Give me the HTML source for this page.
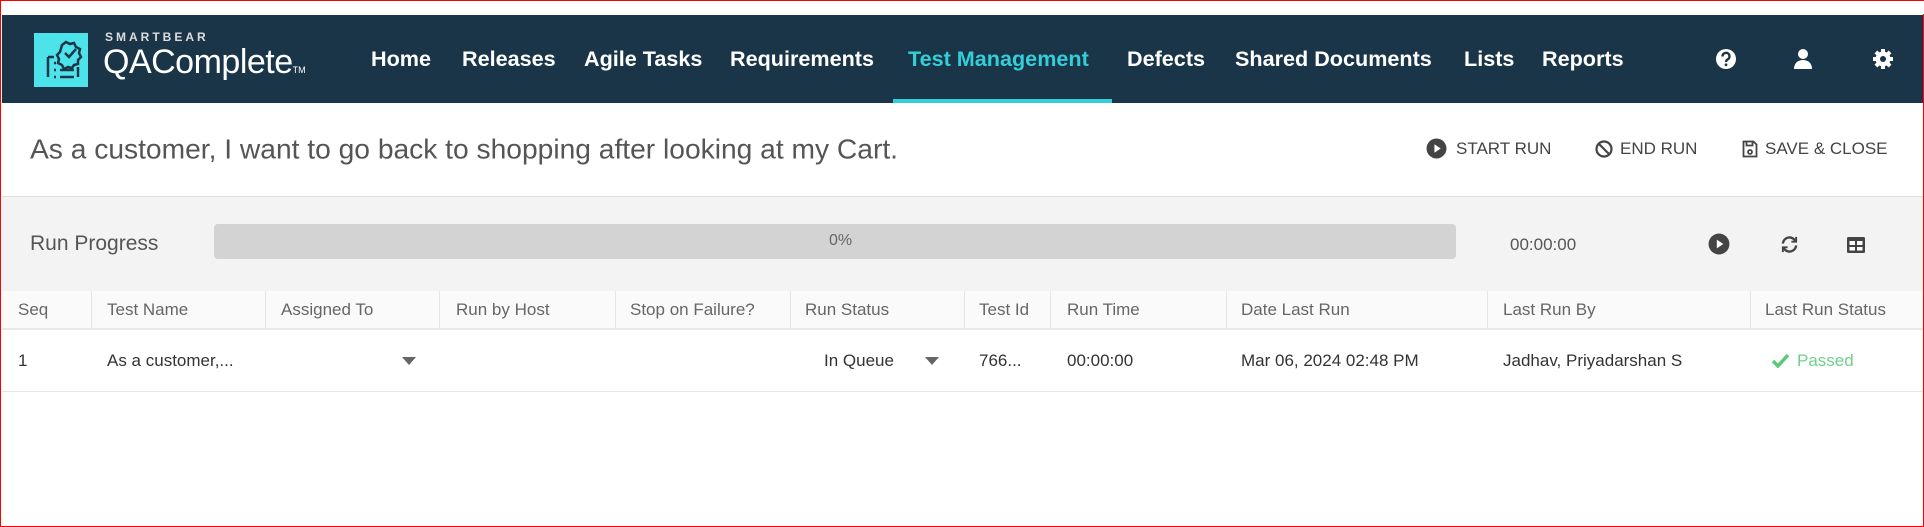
<!DOCTYPE html>
<html><head><meta charset="utf-8"><style>
*{margin:0;padding:0;box-sizing:border-box}
body{width:1924px;height:527px;overflow:hidden;background:#fff;font-family:"Liberation Sans",sans-serif;position:relative;border:1px solid #f00}
.a{position:absolute;white-space:nowrap}
.nav{position:absolute;left:1px;top:14px;width:1921px;height:88px;background:#1a3547}
.ni{position:absolute;top:44px;transform:translateY(-50%);color:#fff;font-weight:bold;font-size:21.6px}
.t{color:#555}
.hd{font-size:17px;color:#666;top:309px;transform:translateY(-50%)}
.rw{font-size:17px;color:#333;top:360px;transform:translateY(-50%)}
.sep{position:absolute;top:290px;height:39px;width:1px;background:#e6e6e6}
.btn{font-size:17px;color:#444;top:148px;transform:translateY(-50%)}
</style></head><body>
<div class="a" style="left:0;top:0;width:1924px;height:13px;background:#fff"></div>
<div class="nav">
 <div class="a" style="left:32px;top:18px;width:54px;height:54px;background:#4de3eb"></div>
 <svg class="a" style="left:32px;top:18px" width="54" height="54" viewBox="0 0 54 54" fill="none" stroke="#1a3547" stroke-width="2.5">
  <path d="M14 24v20M14 24h6M20 30h2M20 37h2M26 37h14M20 44h2M26 44h14M44 34v10"/>
  <path d="M28 12l4-3 4 2 4-1 2 4 4 2-1 4 2 4-3 3 0 4-4 1-2 3-4-1-4 2-2-4-4-2 1-4-2-4 3-3z"/>
  <path d="M31 20l4 4 7-8"/>
 </svg>
 <div class="a" style="left:103px;top:15px;font-size:12px;letter-spacing:3px;color:#ddd;font-weight:bold">SMARTBEAR</div>
 <div class="a" style="left:101px;top:28px;font-size:34px;color:#fff;letter-spacing:-0.5px">QAComplete<span style="font-size:9px;letter-spacing:0">TM</span></div>
 <div class="ni" style="left:369px">Home</div>
 <div class="ni" style="left:460px">Releases</div>
 <div class="ni" style="left:582px">Agile Tasks</div>
 <div class="ni" style="left:728px">Requirements</div>
 <div class="ni" style="left:906px;color:#33cfd9">Test Management</div>
 <div class="a" style="left:891px;top:84px;width:219px;height:4px;background:#33cfd9"></div>
 <div class="ni" style="left:1125px">Defects</div>
 <div class="ni" style="left:1233px">Shared Documents</div>
 <div class="ni" style="left:1462px">Lists</div>
 <div class="ni" style="left:1540px">Reports</div>
 <svg class="a" style="left:1713px;top:33px" width="22" height="22" viewBox="0 0 22 22"><circle cx="11" cy="11" r="10" fill="#fff"/><path d="M7.5 8.5a3.5 3.5 0 1 1 5 3c-1 .6-1.5 1-1.5 2.5" stroke="#1a3547" stroke-width="2.4" fill="none"/><circle cx="11" cy="16.8" r="1.4" fill="#1a3547"/></svg>
 <svg class="a" style="left:1790px;top:33px" width="22" height="22" viewBox="0 0 22 22" fill="#fff"><circle cx="11" cy="6" r="5"/><path d="M2 21c0-6 4-9 9-9s9 3 9 9z"/></svg>
 <svg class="a" style="left:1870px;top:33px" width="22" height="22" viewBox="0 0 22 22"><g fill="#fff"><circle cx="11" cy="11" r="7.5"/><rect x="9" y="1" width="4" height="20"/><rect x="1" y="9" width="20" height="4"/><rect x="9" y="1" width="4" height="20" transform="rotate(45 11 11)"/><rect x="9" y="1" width="4" height="20" transform="rotate(-45 11 11)"/></g><circle cx="11" cy="11" r="3" fill="#1a3547"/></svg>
</div>
<div class="a t" style="left:29px;top:148px;transform:translateY(-50%);font-size:28.2px;color:#555">As a customer, I want to go back to shopping after looking at my Cart.</div>
<svg class="a" style="left:1425px;top:137px" width="21" height="21" viewBox="0 0 20 20"><circle cx="10" cy="10" r="9.5" fill="#444"/><path d="M8 6l6 4-6 4z" fill="#fff"/></svg>
<div class="a btn" style="left:1455px">START RUN</div>
<svg class="a" style="left:1594px;top:139px" width="18" height="18" viewBox="0 0 18 18" fill="none" stroke="#444" stroke-width="2.2"><circle cx="9" cy="9" r="7.5"/><path d="M4 4l10 10"/></svg>
<div class="a btn" style="left:1619px">END RUN</div>
<svg class="a" style="left:1741px;top:139px" width="16" height="18" viewBox="0 0 16 18" fill="none" stroke="#444" stroke-width="1.8"><path d="M1.5 1.5h10l3 3v12h-13z"/><path d="M4.5 1.5v4h6v-4"/><circle cx="8" cy="12" r="2"/></svg>
<div class="a btn" style="left:1764px">SAVE &amp; CLOSE</div>
<div class="a" style="left:1px;top:195px;width:1921px;height:95px;background:#f3f3f3;border-top:1px solid #ddd"></div>
<div class="a" style="left:29px;top:243px;transform:translateY(-50%);font-size:21px;color:#555">Run Progress</div>
<div class="a" style="left:213px;top:223px;width:1242px;height:35px;background:#d3d3d3;border-radius:4px"></div>
<div class="a" style="left:828px;top:240px;transform:translateY(-50%);font-size:16px;color:#666">0%</div>
<div class="a" style="left:1509px;top:244px;transform:translateY(-50%);font-size:17px;color:#555">00:00:00</div>
<svg class="a" style="left:1707px;top:232px" width="22" height="22" viewBox="0 0 20 20"><circle cx="10" cy="10" r="9.5" fill="#444"/><path d="M8 6l6 4-6 4z" fill="#fff"/></svg>
<svg class="a" style="left:1779px;top:234px" width="19" height="19" viewBox="0 0 20 20" fill="none" stroke="#444" stroke-width="2.5"><path d="M3 9a7 7 0 0 1 13-3M17 11a7 7 0 0 1-13 3"/><path d="M17 2v5h-5M3 18v-5h5" stroke-width="2"/></svg>
<svg class="a" style="left:1846px;top:236px" width="18" height="16" viewBox="0 0 18 16"><rect x="0" y="0" width="18" height="16" rx="1.5" fill="#444"/><g fill="#fff"><rect x="2.5" y="4" width="5.5" height="4"/><rect x="10" y="4" width="5.5" height="4"/><rect x="2.5" y="10" width="5.5" height="3.5"/><rect x="10" y="10" width="5.5" height="3.5"/></g></svg>
<div class="a" style="left:1px;top:290px;width:1921px;height:39px;background:#fafafa;border-bottom:2px solid #e8e8e8"></div>
<div class="sep" style="left:90px"></div><div class="sep" style="left:264px"></div><div class="sep" style="left:438px"></div><div class="sep" style="left:614px"></div><div class="sep" style="left:789px"></div><div class="sep" style="left:963px"></div><div class="sep" style="left:1049px"></div><div class="sep" style="left:1225px"></div><div class="sep" style="left:1486px"></div><div class="sep" style="left:1749px"></div>
<div class="a hd" style="left:17px">Seq</div>
<div class="a hd" style="left:106px">Test Name</div>
<div class="a hd" style="left:280px">Assigned To</div>
<div class="a hd" style="left:455px">Run by Host</div>
<div class="a hd" style="left:629px">Stop on Failure?</div>
<div class="a hd" style="left:804px">Run Status</div>
<div class="a hd" style="left:978px">Test Id</div>
<div class="a hd" style="left:1066px">Run Time</div>
<div class="a hd" style="left:1240px">Date Last Run</div>
<div class="a hd" style="left:1502px">Last Run By</div>
<div class="a hd" style="left:1764px">Last Run Status</div>
<div class="a" style="left:1px;top:390px;width:1921px;height:1px;background:#e6e6e6"></div>
<div class="a rw" style="left:17px">1</div>
<div class="a rw" style="left:106px">As a customer,...</div>
<div class="a" style="left:401px;top:356px;width:0;height:0;border-left:7px solid transparent;border-right:7px solid transparent;border-top:8px solid #666"></div>
<div class="a rw" style="left:823px">In Queue</div>
<div class="a" style="left:924px;top:356px;width:0;height:0;border-left:7px solid transparent;border-right:7px solid transparent;border-top:8px solid #666"></div>
<div class="a rw" style="left:978px">766...</div>
<div class="a rw" style="left:1066px">00:00:00</div>
<div class="a rw" style="left:1240px">Mar 06, 2024 02:48 PM</div>
<div class="a rw" style="left:1502px">Jadhav, Priyadarshan S</div>
<svg class="a" style="left:1770px;top:352px" width="19" height="15" viewBox="0 0 19 15"><path d="M2 8l5 5L17 2" stroke="#5cc87a" stroke-width="3.5" fill="none"/></svg>
<div class="a rw" style="left:1796px;color:#6fd08c">Passed</div>
</body></html>
